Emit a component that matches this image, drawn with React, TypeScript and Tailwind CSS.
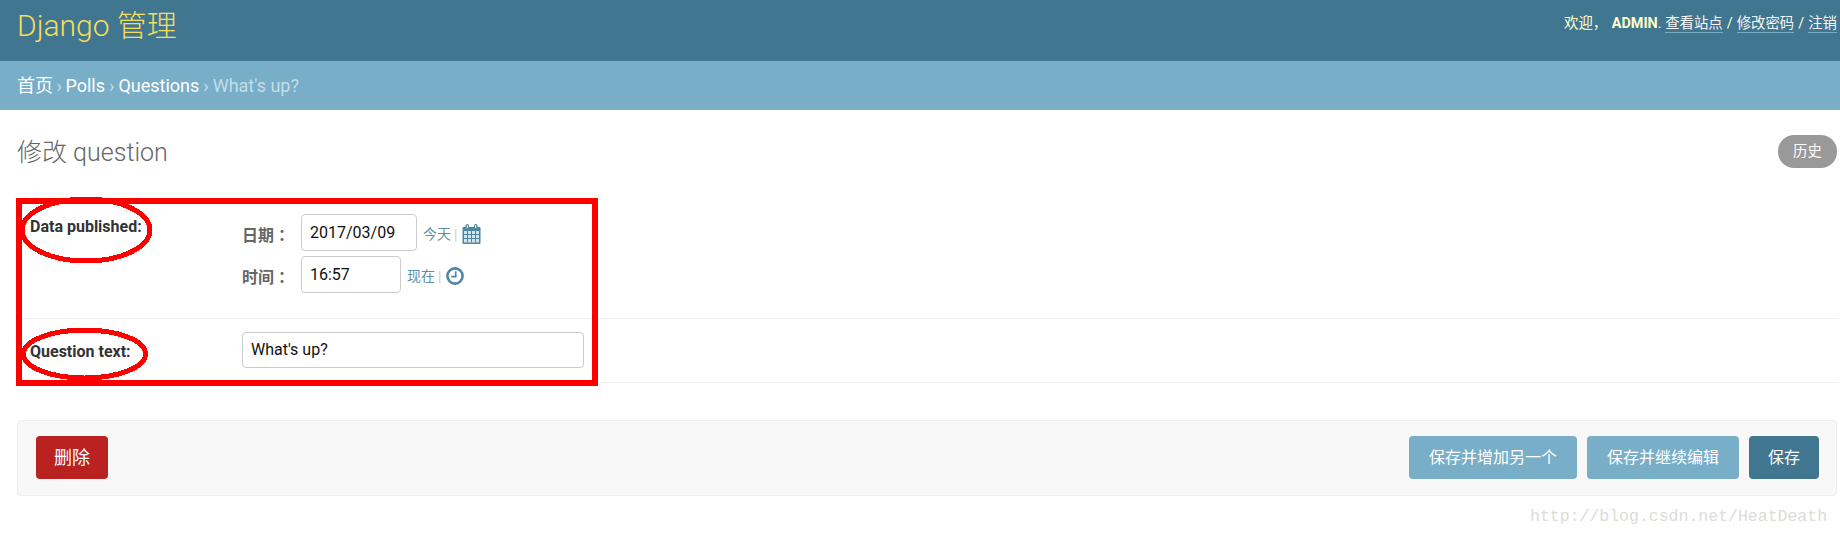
const sans = "font-['Roboto','Noto_Sans_CJK_SC',sans-serif]";

function CalendarIcon() {
  return (
    <svg width="19" height="20" viewBox="0 0 19 20" className="ml-[2px] mt-[3px]">
      <path d="M1.5 3h16a1 1 0 0 1 1 1v15a1 1 0 0 1-1 1h-16a1 1 0 0 1-1-1V4a1 1 0 0 1 1-1z" fill="#4f86a3" />
      <rect x="3.5" y="0" width="3.5" height="5.5" rx="1.7" fill="#4f86a3" />
      <rect x="12" y="0" width="3.5" height="5.5" rx="1.7" fill="#4f86a3" />
      <rect x="4.8" y="1.2" width="1" height="3" fill="#fff" />
      <rect x="13.2" y="1.2" width="1" height="3" fill="#fff" />
      <path d="M2 7h15v11.5H2z" fill="#d3e3eb" />
      <path d="M5.5 7v11.5M9.5 7v11.5M13.5 7v11.5M2 10.5h15M2 14.5h15" stroke="#4f86a3" strokeWidth="1" />
    </svg>
  );
}

function ClockIcon() {
  return (
    <svg width="18" height="18" viewBox="0 0 18 18" className="ml-[2px] mt-[3px]">
      <circle cx="9" cy="9" r="7.6" fill="#fff" stroke="#4f86a3" strokeWidth="2.6" />
      <path d="M9.7 4.2v5.4H5.2" fill="none" stroke="#4f86a3" strokeWidth="1.7" />
    </svg>
  );
}

function DateLine({ label, value, inputW, link, icon }: { label: string; value: string; inputW: string; link: string; icon: React.ReactNode }) {
  return (
    <div className="flex items-center">
      <span className="mt-[4px] w-[59px] text-[16px] font-bold leading-[20px] text-[#666]">
        {label}
        <span className="font-['Noto_Sans_CJK_TC',sans-serif]">：</span>
      </span>
      <div className={`${inputW} flex h-[37px] items-center rounded-[4px] border border-[#ccc] bg-white pl-[8px] text-[16px] text-[#111]`}>{value}</div>
      <a className="ml-[6px] mt-[4px] text-[14px] text-[#5b8fa9]">{link}</a>
      <span className="mx-[3px] mt-[4px] text-[14px] leading-none text-[#ccc]">|</span>
      {icon}
    </div>
  );
}

function Btn({ children, className }: { children: React.ReactNode; className: string }) {
  return <button className={`flex h-[43px] items-center justify-center rounded-[4px] text-[16px] text-white ${className}`}>{children}</button>;
}

export default function App() {
  return (
    <div className={`relative h-[538px] w-[1840px] overflow-hidden bg-white ${sans}`}>
      <header className="flex h-[61px] items-start justify-between bg-[#417690] pl-[17px] pr-[3px]">
        <h1 className="mt-[4px] text-[30px] font-light leading-[44px] text-[#f5dd5d]">Django 管理</h1>
        <div className="mt-[14px] text-[14.4px] leading-[20px] text-[#ffc]">
          欢迎， <strong className="ml-[1px] font-bold">ADMIN</strong>.{" "}
          <a className="border-b border-[#79aec8] text-[#f5f5f5]">查看站点</a>
          <span className="mx-[4px]">/</span>
          <a className="border-b border-[#79aec8] text-[#f5f5f5]">修改密码</a>
          <span className="mx-[4px]">/</span>
          <a className="border-b border-[#79aec8] text-[#f5f5f5]">注销</a>
        </div>
      </header>

      <nav className="flex h-[49px] items-center bg-[#79aec8] pl-[17px] text-[18px] text-white">
        <a>首页</a>
        <span className="mx-[3.5px] text-[#c4dce8]">›</span>
        <a>Polls</a>
        <span className="mx-[4px] text-[#c4dce8]">›</span>
        <a>Questions</a>
        <span className="mx-[4px] text-[#c4dce8]">›</span>
        <span className="text-[#c4dce8]">What's up?</span>
      </nav>

      <main className="pl-[17px] pr-[3px]">
        <div className="flex h-[87px] items-start justify-between">
          <h2 className="mt-[26px] text-[25px] font-light leading-[34px] text-[#666]">修改 question</h2>
          <a className="mt-[25px] flex h-[33px] w-[59px] items-center justify-center rounded-[16px] bg-[#999] pt-[1px] text-[14.4px] text-white">历史</a>
        </div>

        <div className="flex h-[122px] border-b border-[#eee]">
          <label className="ml-[13px] mt-[20px] w-[212px] text-[16px] font-bold leading-[20px] text-[#333]">Data published:</label>
          <div className="mt-[17px] flex flex-col gap-[5px]">
            <DateLine label="日期" value="2017/03/09" inputW="w-[116px]" link="今天" icon={<CalendarIcon />} />
            <DateLine label="时间" value="16:57" inputW="w-[100px]" link="现在" icon={<ClockIcon />} />
          </div>
        </div>

        <div className="flex h-[64px] border-b border-[#eee]">
          <label className="ml-[13px] mt-[23px] w-[212px] text-[16px] font-bold leading-[20px] text-[#333]">Question text:</label>
          <div className="mt-[13px] flex h-[36px] w-[342px] items-center rounded-[4px] border border-[#ccc] bg-white pl-[8px] text-[16px] text-[#111]">What's up?</div>
        </div>

        <div className="mt-[37px] flex h-[76px] items-start justify-between rounded-[4px] border border-[#eee] bg-[#f8f8f8] pl-[18px] pr-[17px] pt-[15px]">
          <Btn className="w-[72px] bg-[#ba2121] text-[18px]">删除</Btn>
          <div className="flex gap-[10px]">
            <Btn className="w-[168px] bg-[#79aec8]">保存并增加另一个</Btn>
            <Btn className="w-[152px] bg-[#79aec8]">保存并继续编辑</Btn>
            <Btn className="w-[70px] bg-[#417690]">保存</Btn>
          </div>
        </div>
      </main>

      <div className="absolute left-[1530px] top-[505px] font-['Liberation_Mono',monospace] text-[16.5px] leading-[24px] text-[#dcdcd8]">http://blog.csdn.net/HeatDeath</div>

      <svg className="pointer-events-none absolute left-0 top-0" width="1840" height="538" shapeRendering="crispEdges">
        <rect x="19" y="201" width="576" height="182" fill="none" stroke="#ff0000" strokeWidth="6" />
        <ellipse cx="86" cy="230" rx="64" ry="31" fill="none" stroke="#ff0000" strokeWidth="5" />
        <ellipse cx="84.5" cy="354" rx="61" ry="24" fill="none" stroke="#ff0000" strokeWidth="5" />
      </svg>
    </div>
  );
}
